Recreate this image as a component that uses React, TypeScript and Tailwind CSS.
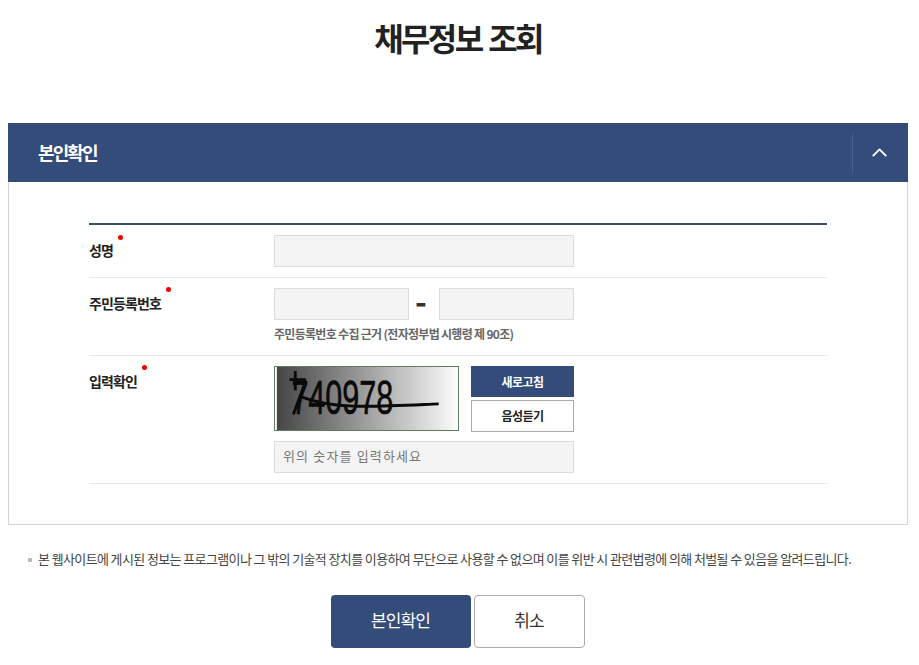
import React from 'react';
import { ChevronUp } from 'lucide-react';

const font = "font-['Noto_Sans_CJK_KR','Noto_Sans',sans-serif]";

// Field label with the red "required" dot
const FieldLabel: React.FC<{ text: string; dotClass: string }> = ({ text, dotClass }) => (
  <div className="relative w-[185px] shrink-0 text-[14px] leading-[20px] font-bold tracking-[-0.9px] text-[#222]">
    <span>{text}</span>
    <span className={`absolute h-[5px] w-[5px] rounded-full bg-[#f00000] ${dotClass}`} />
  </div>
);

const Captcha: React.FC = () => (
  <svg width="185" height="65" className="block border border-[#5b7f5e]" viewBox="0 0 185 65">
    <defs>
      <linearGradient id="captchaBg" x1="0" x2="1" y1="0" y2="0">
        <stop offset="0" stopColor="#454545" />
        <stop offset="1" stopColor="#fafafa" />
      </linearGradient>
    </defs>
    <rect width="185" height="65" fill="url(#captchaBg)" />
    <text
      x="15"
      y="49"
      fontFamily="'Liberation Sans', sans-serif"
      fontSize="50"
      textLength="105"
      lengthAdjust="spacingAndGlyphs"
      stroke="#0a0a0a"
      strokeWidth="0.7"
      fill="#0a0a0a"
    >
      740978
    </text>
    <path d="M13 13 H30 M19 4 L19 24 M30 14 L17 49" stroke="#0a0a0a" strokeWidth="3" fill="none" />
    <path d="M26 31 C60 44 100 41 167 38" stroke="#0a0a0a" strokeWidth="3" fill="none" />
  </svg>
);

export default function App() {
  return (
    <div className={`${font} h-[665px] w-[919px] overflow-hidden bg-white`}>
      <h1 className="h-[123px] pt-[13px] pr-[3px] text-center text-[32px] leading-[48px] font-bold tracking-[-2.6px] [word-spacing:2px] text-[#222]">
        채무정보 조회
      </h1>

      <section className="ml-2 w-[900px]">
        <div className="flex h-[59px] items-center justify-between bg-[#334c79] pl-[30px]">
          <h2 className="pb-[1px] text-[18px] font-bold tracking-[-1.9px] text-white">본인확인</h2>
          <div className="flex h-[40px] w-[56px] items-center justify-center border-l border-[#47608c]">
            <ChevronUp className="mr-[3px] h-[25px] w-[25px] text-white" strokeWidth={1.8} />
          </div>
        </div>

        <div className="h-[343px] border-x border-b border-t-0 border-[#d5d5d5] px-[80px] pt-[41px]">
          <div className="border-t-2 border-[#334c79]">
            {/* 성명 */}
            <div className="flex h-[53px] border-b border-[#eaeaea] pt-[10px]">
              <div className="pt-[5px]">
                <FieldLabel text="성명" dotClass="left-[29px] top-[-5px]" />
              </div>
              <input className="h-[32px] w-[300px] border border-[#dcdcdc] bg-[#f4f4f4]" aria-label="성명" />
            </div>

            {/* 주민등록번호 */}
            <div className="flex h-[78px] border-b border-[#eaeaea] pt-[10px]">
              <div className="pt-[5px]">
                <FieldLabel text="주민등록번호" dotClass="left-[77px] top-[-6px]" />
              </div>
              <div>
                <div className="flex items-center">
                  <input className="h-[32px] w-[135px] border border-[#dcdcdc] bg-[#f4f4f4]" aria-label="주민번호 앞자리" />
                  <span className="flex w-[30px] justify-center pr-[6px] pb-[9px] text-[32px] leading-[20px] font-bold text-[#333]">-</span>
                  <input className="h-[32px] w-[135px] border border-[#dcdcdc] bg-[#f4f4f4]" aria-label="주민번호 뒷자리" />
                </div>
                <p className="mt-[4px] text-[12px] leading-[20px] font-bold tracking-[-0.7px] text-[#666]">
                  주민등록번호 수집 근거 (전자정부법 시행령 제 90조)
                </p>
              </div>
            </div>

            {/* 입력확인 */}
            <div className="flex h-[128px] border-b border-[#eaeaea] pt-[10px]">
              <div className="pt-[5px]">
                <FieldLabel text="입력확인" dotClass="left-[53px] top-[-6px]" />
              </div>
              <div className="w-[300px]">
                <div className="flex justify-between">
                  <Captcha />
                  <div className="flex w-[103px] flex-col gap-[3px]">
                    <button className="h-[31px] bg-[#334c79] text-[12px] font-bold tracking-[-0.6px] text-white">새로고침</button>
                    <button className="h-[32px] border border-[#aaa] bg-white text-[12px] font-bold tracking-[-0.6px] text-[#222]">음성듣기</button>
                  </div>
                </div>
                <input
                  className="mt-[9px] h-[32px] w-[300px] border border-[#dcdcdc] bg-[#f4f4f4] px-[8px] pb-[3px] text-[13px] tracking-[1.15px] placeholder:text-[#777]"
                  placeholder="위의 숫자를 입력하세요"
                />
              </div>
            </div>
          </div>
        </div>
      </section>

      <div className="flex h-[70px] items-center pl-[28px]">
        <span className="mr-[6px] h-[4px] w-[4px] bg-[#bbb]" />
        <p className="pb-[2px] text-[13px] tracking-[-0.62px] whitespace-nowrap text-[#444]">
          본 웹사이트에 게시된 정보는 프로그램이나 그 밖의 기술적 장치를 이용하여 무단으로 사용할 수 없으며 이를 위반 시 관련법령에 의해 처벌될 수 있음을 알려드립니다.
        </p>
      </div>

      <div className="flex justify-center gap-[3px] pr-[4px]">
        <button className="h-[53px] w-[140px] rounded-[4px] bg-[#334c79] pb-[3px] text-[17px] tracking-[-0.9px] text-white">본인확인</button>
        <button className="h-[53px] w-[111px] rounded-[4px] border border-[#aaa] bg-white pb-[3px] text-[17px] tracking-[-0.9px] text-[#333]">취소</button>
      </div>
    </div>
  );
}
